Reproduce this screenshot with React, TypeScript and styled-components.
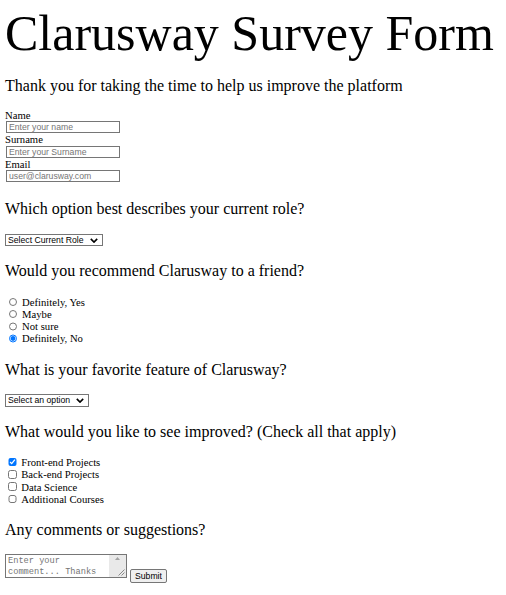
import styled, { createGlobalStyle } from 'styled-components';

const GlobalStyle = createGlobalStyle`
  body {
    margin: 0;
    background: #fff;
    color: #000;
    font-family: 'Liberation Serif', 'Times New Roman', serif;
  }
`;

const Page = styled.main`
  padding: 5px 5px 0;
`;

const Title = styled.h1`
  margin: 0;
  font-size: 50px;
  font-weight: 400;
  line-height: 56px;
`;

const Subtitle = styled.h2`
  margin: 15.5px 0 14px;
  font-size: 16px;
  font-weight: 400;
  line-height: 18.4px;
`;

const Question = styled.h2`
  margin: 16px 0 15px;
  font-size: 16px;
  font-weight: 400;
  line-height: 18.4px;
`;

const Form = styled.form`
  display: block;
`;

const Fields = styled.div`
  margin-bottom: 18px;
`;

const FieldLabel = styled.label`
  display: block;
  font-size: 10.67px;
  line-height: 12.25px;
`;

const TextInput = styled.input`
  display: block;
  box-sizing: border-box;
  width: 114px;
  height: 12.25px;
  margin: 0 0 0 1px;
  padding: 0 2px;
  border: 1px solid #767676;
  border-radius: 0;
  font-family: 'Liberation Sans', Arial, sans-serif;
  font-size: 8.67px;
  color: #000;
  outline: none;

  &::placeholder {
    color: #757575;
  }
`;

const SelectBox = styled.div`
  display: flex;
  align-items: center;
  width: fit-content;
  height: 12.5px;
  box-sizing: border-box;
  border: 1px solid #767676;
  background: #fff;
  padding-right: 4px;

  svg {
    flex-shrink: 0;
    margin-left: 2px;
  }
`;

const Select = styled.select<{ $width: number }>`
  appearance: none;
  width: ${({ $width }) => $width}px;
  height: 100%;
  margin: 0;
  padding: 0 0 0 2px;
  border: none;
  background: transparent;
  font-family: 'Liberation Sans', Arial, sans-serif;
  font-size: 8.67px;
  line-height: 10px;
  color: #000;
  outline: none;
`;

const OptionList = styled.div`
  display: block;
`;

const Option = styled.label`
  display: flex;
  align-items: center;
  height: 12.25px;
  font-size: 10.67px;
  line-height: 12.25px;
`;

const Radio = styled.input.attrs({ type: 'radio' })`
  width: 8.67px;
  height: 8.67px;
  margin: 0 4.8px 0 3.6px;
`;

const Checkbox = styled.input.attrs({ type: 'checkbox' })`
  width: 8.67px;
  height: 8.67px;
  margin: 0 4.6px 0 3px;
`;

const CommentRow = styled.div`
  display: flex;
  align-items: flex-start;
  gap: 3px;
`;

const CommentBox = styled.div`
  display: flex;
  box-sizing: border-box;
  width: 122px;
  height: 24px;
  border: 1px solid #767676;
  background: #fff;
`;

const CommentInput = styled.textarea`
  flex: 1;
  min-width: 0;
  margin: 0;
  padding: 1px 2px;
  border: none;
  resize: none;
  overflow: hidden;
  font-family: 'Liberation Mono', 'Courier New', monospace;
  font-size: 8.67px;
  line-height: 10.5px;
  outline: none;

  &::placeholder {
    color: #757575;
  }
`;

const ScrollRail = styled.div`
  display: flex;
  flex-direction: column;
  align-items: center;
  justify-content: space-between;
  width: 17px;
  background: #e9e9e9;
  padding: 2px 0 1px;
  box-sizing: border-box;

  svg:last-child {
    align-self: flex-end;
    margin-right: 1px;
  }
`;

const SubmitButton = styled.button`
  margin-top: 15px;
  height: 14px;
  padding: 0 4px;
  border: 1px solid #767676;
  border-radius: 2px;
  background: #efefef;
  font-family: 'Liberation Sans', Arial, sans-serif;
  font-size: 8.67px;
  line-height: 12px;
  color: #000;
`;

function Chevron() {
  return (
    <svg width="8" height="5" viewBox="0 0 10 6">
      <path d="M1 1 L5 5 L9 1" fill="none" stroke="#000" strokeWidth="2" />
    </svg>
  );
}

const roles = ['Student', 'Full Stack Developer', 'Front-end Developer', 'Back-end Developer', 'Data Scientist', 'Other'];
const features = ['Challenges', 'Projects', 'Community', 'Open Source'];
const recommend = ['Definitely, Yes', 'Maybe', 'Not sure', 'Definitely, No'];
const improvements = ['Front-end Projects', 'Back-end Projects', 'Data Science', 'Additional Courses'];

export default function App() {
  return (
    <>
      <GlobalStyle />
      <Page>
        <Title>Clarusway Survey Form</Title>
        <Subtitle>Thank you for taking the time to help us improve the platform</Subtitle>

        <Form onSubmit={(e) => e.preventDefault()}>
          <Fields>
            <FieldLabel htmlFor="name">Name</FieldLabel>
            <TextInput id="name" type="text" placeholder="Enter your name" />
            <FieldLabel htmlFor="surname">Surname</FieldLabel>
            <TextInput id="surname" type="text" placeholder="Enter your Surname" />
            <FieldLabel htmlFor="email">Email</FieldLabel>
            <TextInput id="email" type="email" placeholder="user@clarusway.com" />
          </Fields>

          <Question>Which option best describes your current role?</Question>
          <SelectBox>
            <Select $width={82} defaultValue="">
              <option value="" disabled>Select Current Role</option>
              {roles.map((role) => (
                <option key={role}>{role}</option>
              ))}
            </Select>
            <Chevron />
          </SelectBox>

          <Question>Would you recommend Clarusway to a friend?</Question>
          <OptionList>
            {recommend.map((item, i) => (
              <Option key={item}>
                <Radio name="recommend" value={item} defaultChecked={i === 3} />
                {item}
              </Option>
            ))}
          </OptionList>

          <Question>What is your favorite feature of Clarusway?</Question>
          <SelectBox>
            <Select $width={68} defaultValue="">
              <option value="" disabled>Select an option</option>
              {features.map((feature) => (
                <option key={feature}>{feature}</option>
              ))}
            </Select>
            <Chevron />
          </SelectBox>

          <Question>What would you like to see improved? (Check all that apply)</Question>
          <OptionList>
            {improvements.map((item, i) => (
              <Option key={item}>
                <Checkbox name="improve" value={item} defaultChecked={i === 0} />
                {item}
              </Option>
            ))}
          </OptionList>

          <Question>Any comments or suggestions?</Question>
          <CommentRow>
            <CommentBox>
              <CommentInput placeholder="Enter your comment... Thanks" />
              <ScrollRail>
                <svg width="5" height="3" viewBox="0 0 5 3">
                  <path d="M0 3 L2.5 0 L5 3 Z" fill="#a3a3a3" />
                </svg>
                <svg width="7" height="7" viewBox="0 0 7 7">
                  <path d="M6.5 0.5 L0.5 6.5 M6.5 3.5 L3.5 6.5" stroke="#8a8a8a" strokeWidth="1" />
                </svg>
              </ScrollRail>
            </CommentBox>
            <SubmitButton type="submit">Submit</SubmitButton>
          </CommentRow>
        </Form>
      </Page>
    </>
  );
}
